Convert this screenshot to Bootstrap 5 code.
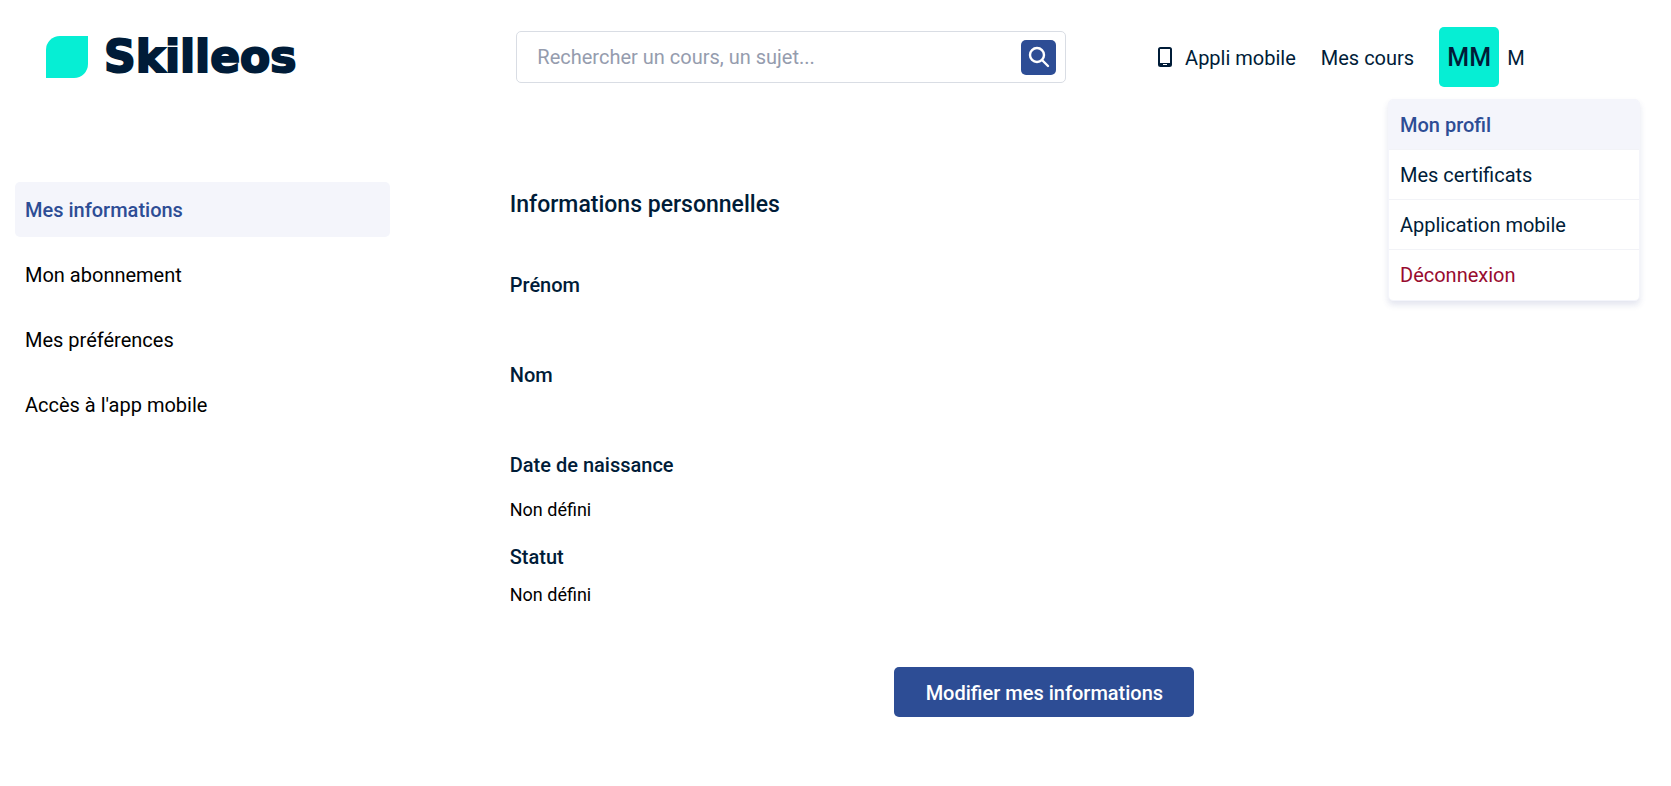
<!DOCTYPE html>
<html lang="fr">
<head>
<meta charset="utf-8">
<meta name="viewport" content="width=device-width, initial-scale=1">
<title>Skilleos - Mes informations</title>
<link href="https://cdn.jsdelivr.net/npm/bootstrap@5.3.0/dist/css/bootstrap.min.css" rel="stylesheet">
<style>
:root { --navy: #001c38; --blue: #2d4d95; --mint: #06eed4; --pale: #f4f5fb; }
body { font-family: Roboto, "Liberation Sans", sans-serif; font-size: 20px; line-height: 30px; color: #000; background: #fff; }
a { color: inherit; text-decoration: none; }
.site-header { padding: 27px 0; color: var(--navy); }
.brand-zone { width: 30.9%; padding-left: 46px; }
.brand-name { font-family: "DejaVu Sans", sans-serif; font-weight: 700; font-size: 44px; line-height: 42px; -webkit-text-stroke: 2px var(--navy); }
.search-zone { width: 32.9%; height: 52px; border: 1px solid #d9dde4; border-radius: 5px; padding: 0 9px 0 20px; }
.search-zone .form-control { font-size: 20px; line-height: 30px; color: var(--navy); }
.search-zone .form-control::placeholder { color: #959cae; opacity: 1; }
.search-btn { width: 35px; height: 35px; background: var(--blue); border-radius: 5px; }
.user-zone { padding-left: 92px; gap: 25px; }
.user-zone span, .user-zone .plain-link { padding-top: 2px; }
.app-link { gap: 13px; }
.avatar { width: 60px; height: 60px; background: var(--mint); border-radius: 5px; font-size: 25px; font-weight: 500; }
.profile-menu { top: 99px; right: 31px; width: 252px; border: 1px solid var(--pale); border-radius: 5px; box-shadow: 0 4px 6px rgba(60,70,140,.14); background: #fff; overflow: hidden; }
.profile-menu a { height: 50px; padding: 10px 11px; border-bottom: 1px solid #f2f3f7; color: var(--navy); }
.profile-menu li:last-child a { border-bottom: 0; color: #980b2f; }
.profile-menu a.active, .side-menu a.active { background: var(--pale); color: var(--blue); font-weight: 500; }
.page-body { padding-top: 68px; }
.side-col { padding: 0 28px 0 15px; }
.side-menu { gap: 10px; }
.side-menu a { height: 55px; padding: 13px 10px 12px; border-radius: 5px; }
.info-col { padding: 8px 92px 0; }
.info-col h1 { font-size: 23px; line-height: 30px; font-weight: 500; color: var(--navy); margin-bottom: 50px; }
.info-col dt { font-weight: 500; color: var(--navy); }
.info-col dd { font-size: 18px; margin: 0; min-height: 60px; padding-top: 15px; }
.info-col dd.birth { min-height: 62px; }
.info-col dd.status { min-height: 87px; padding-top: 8px; }
.edit-btn { width: 300px; height: 50px; padding: 11px 0 9px; background: var(--blue); color: #fff; border-radius: 5px; font-size: 20px; font-weight: 500; line-height: 30px; }
.edit-btn:hover { background: var(--navy); color: #fff; }
</style>
</head>
<body>
<header class="site-header position-relative d-flex align-items-center">
  <div class="brand-zone flex-shrink-0">
    <a href="#" class="d-flex align-items-center gap-3">
      <svg width="42" height="42" viewBox="0 0 42 42" aria-hidden="true"><path d="M14 0H42V28A14 14 0 0 1 28 42H0V14A14 14 0 0 1 14 0Z" fill="#06eed4"/></svg>
      <span class="brand-name">Skilleos</span>
    </a>
  </div>
  <form class="search-zone d-flex align-items-center flex-shrink-0" role="search">
    <input class="form-control border-0 p-0 shadow-none bg-transparent" type="search" placeholder="Rechercher un cours, un sujet..." aria-label="Rechercher un cours, un sujet">
    <button class="search-btn btn border-0 p-0 d-flex align-items-center justify-content-center flex-shrink-0" type="submit" aria-label="Rechercher">
      <svg width="22" height="22" viewBox="0 0 22 22" fill="none" stroke="#fff" stroke-width="2.4" stroke-linecap="round"><circle cx="9" cy="9" r="7"/><path d="M14 14L20 20"/></svg>
    </button>
  </form>
  <nav class="user-zone d-flex align-items-center text-nowrap">
    <a href="#" class="app-link d-flex align-items-center">
      <svg width="14" height="20" viewBox="0 0 14 20" aria-hidden="true"><path fill="#001c38" fill-rule="evenodd" d="M2.500 0H11.500A2.500 2.500 0 0 1 14 2.500V17.500A2.500 2.500 0 0 1 11.500 20H2.500A2.500 2.500 0 0 1 0 17.500V2.500A2.500 2.500 0 0 1 2.500 0ZM2 2V16H12V2ZM5 17V18H9V17Z"/></svg>
      <span>Appli mobile</span>
    </a>
    <a href="#" class="plain-link">Mes cours</a>
    <a href="#" class="d-flex align-items-center gap-2">
      <span class="avatar d-flex align-items-center justify-content-center">MM</span>
      <span>M</span>
    </a>
  </nav>
  <ul class="profile-menu list-unstyled position-absolute mb-0">
    <li><a class="d-block active" href="#">Mon profil</a></li>
    <li><a class="d-block" href="#">Mes certificats</a></li>
    <li><a class="d-block" href="#">Application mobile</a></li>
    <li><a class="d-block" href="#">Déconnexion</a></li>
  </ul>
</header>
<main class="page-body row g-0">
  <aside class="side-col col-3">
    <nav class="side-menu d-flex flex-column">
      <a class="active" href="#">Mes informations</a>
      <a href="#">Mon abonnement</a>
      <a href="#">Mes préférences</a>
      <a href="#">Accès à l'app mobile</a>
    </nav>
  </aside>
  <section class="info-col col-9">
    <h1>Informations personnelles</h1>
    <dl class="mb-0">
      <dt>Prénom</dt><dd></dd>
      <dt>Nom</dt><dd></dd>
      <dt>Date de naissance</dt><dd class="birth">Non défini</dd>
      <dt>Statut</dt><dd class="status">Non défini</dd>
    </dl>
    <div class="text-center pt-2"><button type="button" class="edit-btn btn border-0">Modifier mes informations</button></div>
  </section>
</main>
<script src="https://cdn.jsdelivr.net/npm/bootstrap@5.3.0/dist/js/bootstrap.bundle.min.js"></script>
</body>
</html>
